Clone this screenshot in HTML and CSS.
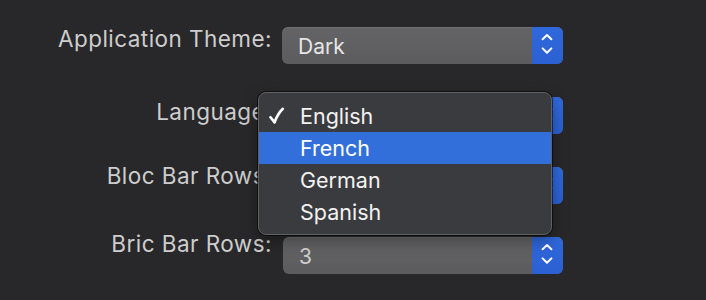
FILE: index.html
```html
<!DOCTYPE html>
<html>
<head>
<meta charset="utf-8">
<link rel="stylesheet" href="styles.css">
</head>
<body>
<div class="form">
  <div class="label l1">Application Theme:</div>
  <div class="popup p1"><span class="value">Dark</span><span class="stepper"><svg width="31" height="37" viewBox="0 0 31 37"><path d="M10.6 12.3 L15 8 L19.4 12.3 M10.6 21.4 L15 25.7 L19.4 21.4" fill="none" stroke="#fff" stroke-width="2" stroke-linecap="round" stroke-linejoin="round"/></svg></span></div>

  <div class="label l2">Language:</div>
  <div class="popup"><span class="value"></span><span class="stepper"><svg width="31" height="37" viewBox="0 0 31 37"><path d="M10.6 12.3 L15 8 L19.4 12.3 M10.6 21.4 L15 25.7 L19.4 21.4" fill="none" stroke="#fff" stroke-width="2" stroke-linecap="round" stroke-linejoin="round"/></svg></span></div>

  <div class="label l3">Bloc Bar Rows:</div>
  <div class="popup"><span class="value"></span><span class="stepper"><svg width="31" height="37" viewBox="0 0 31 37"><path d="M10.6 12.3 L15 8 L19.4 12.3 M10.6 21.4 L15 25.7 L19.4 21.4" fill="none" stroke="#fff" stroke-width="2" stroke-linecap="round" stroke-linejoin="round"/></svg></span></div>

  <div class="label l4">Bric Bar Rows:</div>
  <div class="popup p4"><span class="value dim">3</span><span class="stepper"><svg width="31" height="37" viewBox="0 0 31 37"><path d="M10.6 12.3 L15 8 L19.4 12.3 M10.6 21.4 L15 25.7 L19.4 21.4" fill="none" stroke="#fff" stroke-width="2" stroke-linecap="round" stroke-linejoin="round"/></svg></span></div>

  <div class="menu">
    <div class="item"><span class="check"><svg width="18" height="18" viewBox="0 0 18 18"><path d="M2.5 10.2 L6.6 15.4 C8.5 10 11 5.5 14.8 1.8" fill="none" stroke="#fff" stroke-width="2.6" stroke-linecap="round" stroke-linejoin="round"/></svg></span>English</div>
    <div class="item selected">French</div>
    <div class="item">German</div>
    <div class="item">Spanish</div>
  </div>
</div>
</body>
</html>
```
FILE: styles.css
```css
html, body {
  margin: 0;
  padding: 0;
}
body {
  background: #28282a;
  width: 706px;
  height: 300px;
  overflow: hidden;
  font-family: Inter, "Liberation Sans", sans-serif;
}
.form {
  position: relative;
  display: grid;
  grid-template-columns: 272px 281px;
  grid-auto-rows: 37px;
  column-gap: 10px;
  row-gap: 33px;
  padding-top: 27px;
}
.label {
  align-self: start;
  text-align: right;
  color: #cdcdcd;
  font-size: 22.5px;
  line-height: 22px;
  letter-spacing: 0.45px;
  white-space: nowrap;
}
.l1 { margin-top: 1px; }
.l2 { margin-top: 4px; }
.l3 { margin-top: -2px; }
.l4 { margin-top: -4px; }
.popup {
  display: flex;
  height: 37px;
  border-radius: 6px;
  overflow: hidden;
  background: linear-gradient(#646466, #5c5c5e);
  box-shadow: inset 0 1px 0 rgba(255,255,255,0.08);
}
.p4 { margin-left: 1px; }
.value {
  flex: 1;
  padding-left: 16px;
  padding-top: 2px;
  display: flex;
  align-items: center;
  color: #e6e6e6;
  font-size: 21px;
}
.value.dim {
  color: #cfcfcf;
}
.stepper {
  width: 31px;
  height: 37px;
  background: linear-gradient(#3069dc, #2b60d2);
  display: block;
}
.stepper svg {
  display: block;
}
.menu {
  position: absolute;
  left: 258px;
  top: 92px;
  width: 294px;
  height: 143px;
  box-sizing: border-box;
  padding: 7px 0 7px;
  background: #3a3b3e;
  border: 1px solid #606164;
  border-radius: 8px;
  box-shadow: 0 0 0 1px rgba(0,0,0,0.55), 0 6px 16px rgba(0,0,0,0.35);
  overflow: hidden;
}
.item {
  position: relative;
  height: 32px;
  display: flex;
  align-items: center;
  padding-left: 41px;
  color: #f2f2f2;
  font-size: 21.5px;
}
.item.selected {
  background: #336fda;
  color: #ffffff;
}
.check {
  position: absolute;
  left: 9px;
  top: 7px;
  width: 18px;
  height: 18px;
}
.check svg { display: block; }
```
